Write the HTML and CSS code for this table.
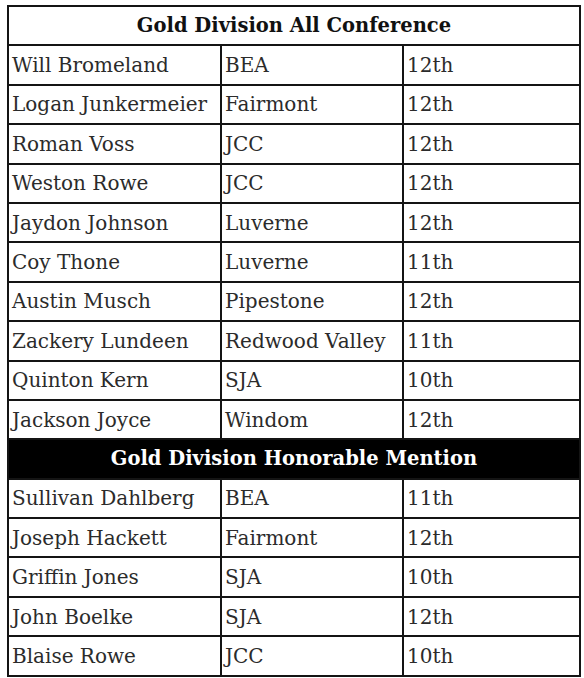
FILE: index.html
```html
<!DOCTYPE html>
<html>
<head>
<meta charset="utf-8">
<link rel="stylesheet" href="styles.css">
</head>
<body>
<table class="roster">
  <colgroup>
    <col class="c-name">
    <col class="c-school">
    <col class="c-grade">
  </colgroup>
  <tbody>
    <tr class="head"><th colspan="3">Gold Division All Conference</th></tr>
    <tr><td>Will Bromeland</td><td>BEA</td><td>12th</td></tr>
    <tr><td>Logan Junkermeier</td><td>Fairmont</td><td>12th</td></tr>
    <tr><td>Roman Voss</td><td>JCC</td><td>12th</td></tr>
    <tr><td>Weston Rowe</td><td>JCC</td><td>12th</td></tr>
    <tr><td>Jaydon Johnson</td><td>Luverne</td><td>12th</td></tr>
    <tr><td>Coy Thone</td><td>Luverne</td><td>11th</td></tr>
    <tr><td>Austin Musch</td><td>Pipestone</td><td>12th</td></tr>
    <tr><td>Zackery Lundeen</td><td>Redwood Valley</td><td>11th</td></tr>
    <tr><td>Quinton Kern</td><td>SJA</td><td>10th</td></tr>
    <tr><td>Jackson Joyce</td><td>Windom</td><td>12th</td></tr>
    <tr class="head dark"><th colspan="3">Gold Division Honorable Mention</th></tr>
    <tr><td>Sullivan Dahlberg</td><td>BEA</td><td>11th</td></tr>
    <tr><td>Joseph Hackett</td><td>Fairmont</td><td>12th</td></tr>
    <tr><td>Griffin Jones</td><td>SJA</td><td>10th</td></tr>
    <tr><td>John Boelke</td><td>SJA</td><td>12th</td></tr>
    <tr><td>Blaise Rowe</td><td>JCC</td><td>10th</td></tr>
  </tbody>
</table>
</body>
</html>
```
FILE: styles.css
```css
html, body {
  margin: 0;
  padding: 0;
  background: #fff;
}
body {
  padding: 5px 2px 0 7px;
}
.roster {
  border-collapse: collapse;
  table-layout: fixed;
  width: 572px;
  font-family: "DejaVu Serif", "Liberation Serif", serif;
  font-size: 20px;
  color: #2b2b2b;
}
.c-name { width: 213px; }
.c-school { width: 182px; }
.c-grade { width: 177px; }
.roster td, .roster th {
  border: 2px solid #141414;
  height: 37.4px;
  padding: 0 3px;
  text-align: left;
  vertical-align: middle;
  white-space: nowrap;
}
.roster th {
  text-align: center;
  font-weight: bold;
  font-size: 19.5px;
  color: #111;
}
.roster .dark th {
  background: #000;
  color: #fff;
}
```
